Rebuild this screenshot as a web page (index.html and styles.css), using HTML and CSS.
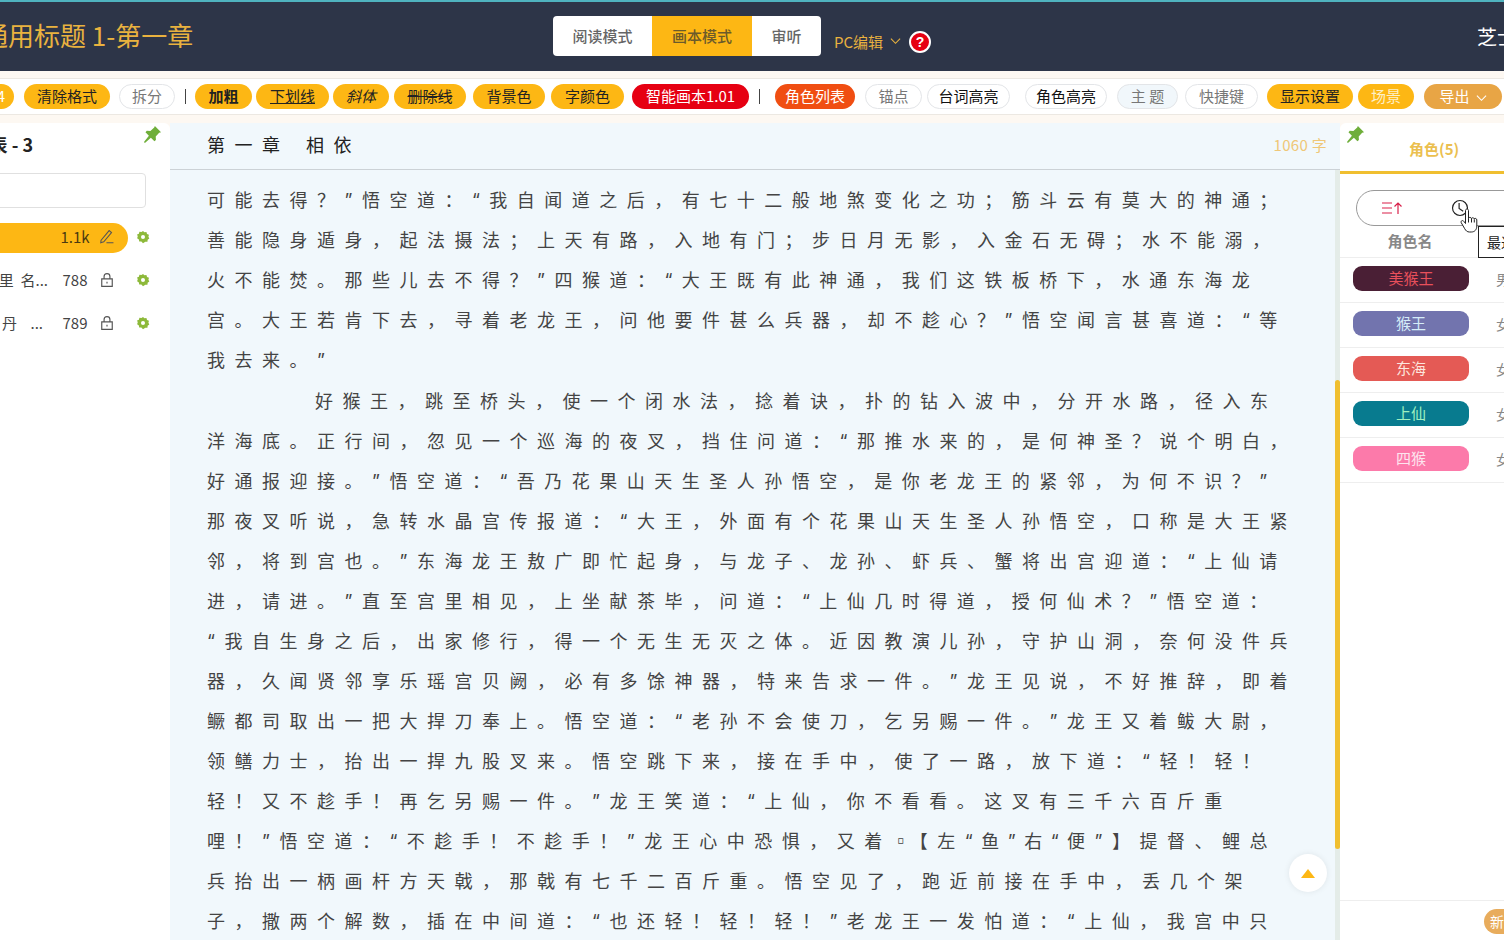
FILE: index.html
```html
<!DOCTYPE html>
<html lang="zh-CN">
<head>
<meta charset="utf-8">
<title>画本模式</title>
<link rel="stylesheet" href="styles.css">
</head>
<body>
<div class="page">
  <header class="topbar">
    <h1 class="book-title">通用标题 1-第一章</h1>
    <div class="modes">
      <span class="mode mode-read">阅读模式</span>
      <span class="mode mode-draw">画本模式</span>
      <span class="mode mode-audit">审听</span>
    </div>
    <div class="editor-switch">
      <span>PC编辑</span>
      <svg class="chev" viewBox="0 0 12 8"><path d="M1 1.5 6 6.5 11 1.5"/></svg>
      <span class="help">?</span>
    </div>
    <span class="user">芝士</span>
  </header>

  <nav class="toolbar">
    <span class="pill gold t-h4">H4</span>
    <span class="pill gold t-clear">清除格式</span>
    <span class="pill plain t-split">拆分</span>
    <i class="sep s1"></i>
    <span class="pill gold t-bold">加粗</span>
    <span class="pill gold t-under">下划线</span>
    <span class="pill gold t-italic">斜体</span>
    <span class="pill gold t-strike">删除线</span>
    <span class="pill gold t-bg">背景色</span>
    <span class="pill gold t-color">字颜色</span>
    <span class="pill red t-ai">智能画本1.01</span>
    <i class="sep s2"></i>
    <span class="pill orange t-roles">角色列表</span>
    <span class="pill plain t-anchor">锚点</span>
    <span class="pill plain dark t-lines">台词高亮</span>
    <span class="pill plain dark t-rolehl">角色高亮</span>
    <span class="pill plain tint t-theme">主 题</span>
    <span class="pill plain t-keys">快捷键</span>
    <span class="pill gold t-display">显示设置</span>
    <span class="pill gold light t-scene">场景</span>
    <span class="pill tan t-export">导出<svg class="chev" viewBox="0 0 12 8"><path d="M1 1.5 6 6.5 11 1.5"/></svg></span>
  </nav>

  <main class="workspace">
    <aside class="left">
      <svg class="pin" viewBox="0 0 20 20"><path d="M12.5 1 19 7.5l-2 .6-3.6 4 .2 3.600-1.600 1.400-3.700-3.800L2 19l-1-1 5.200-6.800-3.600-3.700L4 6l3.800.3 4-3.700z"/></svg>
      <div class="left-inner">
        <h2 class="list-title">章节列表 - 3</h2>
        <div class="search"></div>
        <div class="chapter-row">
          <div class="chapter active"><span class="c-name"></span><span class="c-num">1.1k</span>
            <svg class="c-ico" viewBox="1 1 13 13"><path d="M2 10.500 9.500 1.500l2.200 1.800L4.500 12l-2.800.8zM7 12.800h6.500"/></svg></div>
          <svg class="gear" viewBox="0 0 16 16"><path fill-rule="evenodd" d="M8 1l1.600 1.700 2.300-.4.7 2.200 2.200.9-.6 2.300 1 2-1.900 1.300-.2 2.300-2.400.2L8 15l-1.900-1.800-2.400-.100-.4-2.300L1.300 9.500 2 7.200 1.200 5.100l2.100-.9.600-2.200 2.400.4zM8 5.700a2.300 2.300 0 1 0 0 4.600 2.300 2.300 0 0 0 0-4.600z"/></svg>
        </div>
        <div class="chapter-row">
          <div class="chapter"><span class="c-name">里&nbsp; 名...</span><span class="c-num">788</span>
            <svg class="c-ico" viewBox="1.500 1 11 12"><path d="M2.500 6h9v6.500h-9zM4.500 6V4a2.500 2.500 0 0 1 5 0v2M7 8.500v1.500"/></svg></div>
          <svg class="gear" viewBox="0 0 16 16"><path fill-rule="evenodd" d="M8 1l1.600 1.700 2.300-.4.7 2.200 2.200.9-.6 2.300 1 2-1.900 1.300-.2 2.300-2.400.2L8 15l-1.900-1.800-2.400-.100-.4-2.300L1.300 9.500 2 7.200 1.200 5.100l2.100-.9.600-2.200 2.400.4zM8 5.700a2.300 2.300 0 1 0 0 4.600 2.300 2.300 0 0 0 0-4.600z"/></svg>
        </div>
        <div class="chapter-row">
          <div class="chapter"><span class="c-name c-short">丹 &nbsp; &nbsp;...</span><span class="c-num">789</span>
            <svg class="c-ico" viewBox="1.500 1 11 12"><path d="M2.500 6h9v6.500h-9zM4.500 6V4a2.500 2.500 0 0 1 5 0v2M7 8.500v1.500"/></svg></div>
          <svg class="gear" viewBox="0 0 16 16"><path fill-rule="evenodd" d="M8 1l1.600 1.700 2.300-.4.7 2.200 2.200.9-.6 2.300 1 2-1.900 1.300-.2 2.300-2.400.2L8 15l-1.900-1.800-2.400-.100-.4-2.300L1.300 9.500 2 7.200 1.200 5.100l2.100-.9.600-2.200 2.400.4zM8 5.700a2.300 2.300 0 1 0 0 4.600 2.300 2.300 0 0 0 0-4.600z"/></svg>
        </div>
      </div>
    </aside>

    <section class="reader">
      <div class="reader-head">
        <h2 class="chapter-title">第一章 相依</h2>
        <span class="count">1060 字</span>
      </div>
      <div class="reader-body">
        <p class="para">可能去得？”悟空道：“我自闻道之后，有七十二般地煞变化之功；筋斗云有莫大的神通；<br>善能隐身遁身，起法摄法；上天有路，入地有门；步日月无影，入金石无碍；水不能溺，<br>火不能焚。那些儿去不得？”四猴道：“大王既有此神通，我们这铁板桥下，水通东海龙<br>宫。大王若肯下去，寻着老龙王，问他要件甚么兵器，却不趁心？”悟空闻言甚喜道：“等<br>我去来。”</p>
        <p class="para indent">好猴王，跳至桥头，使一个闭水法，捻着诀，扑的钻入波中，分开水路，径入东<br>洋海底。正行间，忽见一个巡海的夜叉，挡住问道：“那推水来的，是何神圣？说个明白，<br>好通报迎接。”悟空道：“吾乃花果山天生圣人孙悟空，是你老龙王的紧邻，为何不识？”<br>那夜叉听说，急转水晶宫传报道：“大王，外面有个花果山天生圣人孙悟空，口称是大王紧<br>邻，将到宫也。”东海龙王敖广即忙起身，与龙子、龙孙、虾兵、蟹将出宫迎道：“上仙请<br>进，请进。”直至宫里相见，上坐献茶毕，问道：“上仙几时得道，授何仙术？”悟空道：<br>“我自生身之后，出家修行，得一个无生无灭之体。近因教演儿孙，守护山洞，奈何没件兵<br>器，久闻贤邻享乐瑶宫贝阙，必有多馀神器，特来告求一件。”龙王见说，不好推辞，即着<br>鳜都司取出一把大捍刀奉上。悟空道：“老孙不会使刀，乞另赐一件。”龙王又着鲅大尉，<br>领鳝力士，抬出一捍九股叉来。悟空跳下来，接在手中，使了一路，放下道：“轻！轻！<br>轻！又不趁手！再乞另赐一件。”龙王笑道：“上仙，你不看看。这叉有三千六百斤重<br>哩！”悟空道：“不趁手！不趁手！”龙王心中恐惧，又着<span class="tight">▫</span>【左<span class="snug">“鱼”右“</span>便”】提督、鲤总<br>兵抬出一柄画杆方天戟，那戟有七千二百斤重。悟空见了，跑近前接在手中，丢几个架<br>子，撒两个解数，插在中间道：“也还轻！轻！轻！”老龙王一发怕道：“上仙，我宫中只</p>
      </div>
      <div class="to-top"><i class="tri"></i></div>
      <div class="scroll-thumb"></div>
    </section>

    <aside class="right">
      <svg class="pin" viewBox="0 0 20 20"><path d="M12.500 1 19 7.500l-2 .6-3.600 4 .2 3.600-1.600 1.400-3.700-3.800L2 19l-1-1 5.200-6.800-3.600-3.700L4 6l3.800.3 4-3.700z"/></svg>
      <div class="tab"><span>角色(5)</span></div>
      <div class="sorter">
        <svg class="sort-ico" viewBox="0 0 22 14"><path d="M1 2h10M1 7h10M1 12h10"/><path d="M17 13V2M13.500 5.500 17 2l3.500 3.500"/></svg>
        <svg class="clock" viewBox="0 0 20 20"><circle cx="10" cy="10" r="8.300"/><path d="M9 4.500v6l4.500 3"/></svg>
      </div>
      <div class="role-head">角色名</div>
      <ul class="roles">
        <li class="role"><span class="tag r1">美猴王</span><span class="sex">男</span></li>
        <li class="role"><span class="tag r2">猴王</span><span class="sex">女</span></li>
        <li class="role"><span class="tag r3">东海</span><span class="sex">女</span></li>
        <li class="role"><span class="tag r4">上仙</span><span class="sex">女</span></li>
        <li class="role"><span class="tag r5">四猴</span><span class="sex">女</span></li>
      </ul>
      <div class="right-foot"><span class="add">新增</span></div>
      <div class="tooltip">最近</div>
      <svg class="hand" viewBox="0 0 18 26"><path d="M5.500 2.500c0-2 3-2 3 0v8c0-1.500 3-1.500 3 .3 0-1.500 2.800-1.400 2.800.4 0-1.300 2.500-1 2.500.7v6.100c0 3.500-2 6-5.500 6H9.500c-2.500 0-3.600-1.300-4.800-3.300L1.300 14.800c-1-1.700 1.300-3.200 2.500-1.500l1.700 2.200z"/><path d="M8.500 10.500v4M11.500 11v3.500M14.300 11.500v3"/></svg>
    </aside>
  </main>
</div>
</body>
</html>
```
FILE: styles.css
```css
* { box-sizing: border-box; }
html, body { margin: 0; padding: 0; }
body {
  font-family: "Noto Sans CJK SC", "Noto Sans", sans-serif;
  background: #fff;
  color: #333;
}
.page { width: 1504px; height: 940px; overflow: hidden; display: flex; flex-direction: column; background: #fdf8f2; }

/* top bar */
.topbar {
  height: 71px; flex: none; display: flex; align-items: flex-start;
  background: #2d3548; border-top: 2px solid #4fb3bf; white-space: nowrap;
}
.topbar > * { flex: none; }
.book-title {
  margin: 14px 0 0 -18px; width: 571px; font-size: 26px; line-height: 38px; font-weight: 400; color: #e9b23f;
}
.modes { display: flex; margin-top: 14px; height: 40px; border-radius: 4px; overflow: hidden; background: #fff; font-size: 15px; line-height: 39px; font-weight: 500; color: #666; text-align: center; }
.mode-read { width: 99px; }
.mode-draw { width: 100px; background: #fdb714; color: #6b5a2a; }
.mode-audit { width: 69px; }
.editor-switch { display: flex; align-items: center; margin: 26px 0 0 13px; height: 26px; font-size: 15px; color: #e9b23f; }
.chev { width: 11px; height: 8px; fill: none; stroke: currentColor; stroke-width: 1.2; margin-left: 7px; }
.help {
  width: 22px; height: 22px; margin: 2px 0 0 8px; border-radius: 50%; background: #e60012; border: 2px solid #fff;
  color: #fff; font-size: 14px; font-weight: 700; line-height: 18px; text-align: center; font-family: "Liberation Sans", sans-serif;
}
.user { margin: 21px 0 0 546px; font-size: 20px; line-height: 28px; color: #fff; }

/* toolbar */
.toolbar {
  height: 37px; flex: none; margin-top: 7px; display: flex; align-items: center; background: #fff;
  border-top: 1px solid #ece8e2; border-bottom: 1px solid #ece8e2; white-space: nowrap;
}
.pill { flex: none; height: 25px; border-radius: 13px; font-size: 15px; line-height: 23px; text-align: center; color: #222; }
.gold { background: #fdb714; }
.gold.light { color: #fdf0c8; }
.plain { background: #fff; border: 1px solid #e3e5e8; line-height: 21px; color: #777; }
.plain.dark { color: #111; }
.plain.tint { background: #f1f7fb; }
.red { background: #e60012; color: #fff; }
.orange { background: #f04e12; color: #fff; }
.tan { background: #e8a545; color: #fff; }
.tan .chev { margin-left: 6px; }
.sep { flex: none; width: 1px; height: 15px; background: #444; }
.s1 { margin-left: 10px; }
.s2 { margin-left: 10px; }
.t-h4 { width: 44px; margin-left: -30px; text-align: right; padding-right: 9px; color: #fff; }
.t-clear { width: 86px; margin-left: 10px; }
.t-split { width: 56px; margin-left: 9px; }
.t-bold { width: 57px; margin-left: 9px; font-weight: 700; }
.t-under { width: 73px; margin-left: 4px; text-decoration: underline; }
.t-italic { width: 56px; margin-left: 4px; font-style: italic; }
.t-strike { width: 72px; margin-left: 5px; text-decoration: line-through; }
.t-bg { width: 72px; margin-left: 7px; }
.t-color { width: 73px; margin-left: 6px; }
.t-ai { width: 117px; margin-left: 8px; }
.t-roles { width: 80px; margin-left: 15px; }
.t-anchor { width: 57px; margin-left: 10px; }
.t-lines { width: 83px; margin-left: 5px; }
.t-rolehl { width: 82px; margin-left: 15px; }
.t-theme { width: 61px; margin-left: 10px; }
.t-keys { width: 73px; margin-left: 7px; }
.t-display { width: 86px; margin-left: 9px; }
.t-scene { width: 56px; margin-left: 5px; }
.t-export { width: 78px; margin-left: 10px; }

/* workspace */
.workspace { flex: 1; min-height: 0; display: flex; margin-top: 8px; }
.pin { position: absolute; top: 2px; width: 19px; height: 19px; fill: #6fae3a; }

.left { position: relative; flex: none; width: 170px; background: #fff; overflow: hidden; border-top-right-radius: 6px; }
.left .pin { right: 8px; }
.left-inner { width: 270px; margin-left: -124px; padding-top: 8px; }
.list-title { margin: 0; height: 26px; font-size: 18px; line-height: 26px; font-weight: 700; color: #222; text-align: right; padding-right: 113px; white-space: nowrap; }
.search { height: 35px; width: 270px; margin-top: 16px; border: 1px solid #e0e0e0; border-radius: 4px; background: #fff; }
.chapter-row { display: flex; align-items: center; height: 30px; margin-top: 13px; }
.search + .chapter-row { margin-top: 15px; }
.chapter { display: flex; align-items: center; justify-content: flex-end; flex: none; width: 252px; height: 30px; padding: 0 14px 3px 0; border-radius: 15px; font-size: 15px; color: #444; white-space: nowrap; overflow: hidden; }
.chapter.active { background: #fdb714; color: #4a3a10; }
.c-name { flex: 1; text-align: right; padding-right: 12px; }
.c-short { padding-right: 17px; }
.c-num { width: 30px; text-align: center; }
.c-ico { width: 14px; height: 14px; margin-left: 10px; fill: none; stroke: #555; stroke-width: 1; }
.gear { flex: none; width: 14px; height: 14px; margin: 0 0 2px 8px; fill: #8db93a; }

.reader { position: relative; flex: none; width: 1170px; background: #f1f8fc; }
.reader-head { display: flex; justify-content: space-between; align-items: center; height: 47px; padding: 0 13px 3px 37px; border-bottom: 1px solid #ccd2d6; }
.chapter-title { margin: 0 0 2px; font-family: Inter, "Noto Sans CJK SC", sans-serif; font-size: 18px; font-weight: 400; letter-spacing: 9.5px; word-spacing: 2px; color: #222; }
.count { font-size: 15px; letter-spacing: .3px; color: #efc777; }
.reader-body { padding: 11px 0 0 37px; height: 770px; overflow: hidden; }
.para { margin: 0 0 1px; font-family: Inter, "Noto Sans CJK SC", sans-serif; font-size: 18px; line-height: 40px; letter-spacing: 9.5px; text-spacing-trim: space-all; color: #444; white-space: nowrap; }
.tight { letter-spacing: 0; }
.snug { letter-spacing: 8.5px; }
.indent { text-indent: 108px; }
.to-top { position: absolute; right: 13px; top: 731px; width: 38px; height: 38px; border-radius: 50%; background: #fff; box-shadow: 0 0 6px rgba(0,0,0,.08); display: flex; align-items: center; justify-content: center; }
.tri { width: 0; height: 0; border-left: 7.5px solid transparent; border-right: 7.5px solid transparent; border-bottom: 9px solid #fdb714; }
.scroll-thumb { position: absolute; right: 0; top: 257px; width: 5px; height: 469px; border-radius: 3px; background: #f0bf30; z-index: 1; }
.reader::after { content: ""; position: absolute; right: 0; top: 47px; bottom: 0; width: 5px; background: #e4ece8; }

.right { position: relative; flex: none; width: 164px; background: #fff; border-top-left-radius: 6px; overflow: hidden; display: flex; flex-direction: column; }
.right .pin { left: 6px; }
.tab { height: 51px; flex: none; border-bottom: 3px solid #f0bf30; padding-top: 16px; padding-left: 69px; font-size: 15px; line-height: 20px; font-weight: 700; color: #ebbf4f; white-space: nowrap; }
.sorter { flex: none; display: flex; align-items: center; height: 36px; width: 180px; margin: 16px 0 0 16px; border: 1px solid #999; border-radius: 18px; padding-left: 24px; }
.sort-ico { width: 22px; height: 14px; fill: none; stroke: #d9204a; stroke-width: 1.2; }
.clock { width: 18px; height: 18px; margin-left: 48px; fill: none; stroke: #222; stroke-width: 1.3; }
.role-head { flex: none; height: 31px; width: 140px; padding-top: 5px; text-align: center; font-size: 15px; line-height: 20px; font-weight: 700; color: #888; }
.roles { flex: none; margin: 0; padding: 0; list-style: none; border-top: 1px solid #eee; }
.role { display: flex; align-items: center; height: 45px; padding: 0 0 3px 13px; border-bottom: 1px solid #eee; white-space: nowrap; }
.tag { flex: none; width: 116px; height: 25px; border-radius: 9px; font-size: 15px; line-height: 24px; text-align: center; }
.sex { margin-left: 27px; font-size: 14px; color: #888; }
.r1 { background: #4a1f35; color: #e8505b; }
.r2 { background: #7274ae; color: #d5ecf8; }
.r3 { background: #e45a55; color: #fde6de; }
.r4 { background: #087b8f; color: #9ff0c0; }
.r5 { background: #fc7aaa; color: #fde4ee; }
.right-foot { margin-top: auto; flex: none; height: 40px; border-top: 1px solid #eee; padding: 8px 0 0 144px; white-space: nowrap; }
.add { display: block; width: 60px; height: 25px; border-radius: 13px; background: #e8ac5c; color: #fff; font-size: 14px; line-height: 25px; padding-left: 6px; }
.tooltip { position: absolute; left: 138px; top: 103px; width: 60px; height: 32px; border: 1px solid #222; background: #fff; font-size: 14px; line-height: 30px; padding-left: 8px; color: #222; white-space: nowrap; }
.hand { position: absolute; left: 120px; top: 85px; width: 18px; height: 26px; fill: #fff; stroke: #222; stroke-width: 1; }
```
